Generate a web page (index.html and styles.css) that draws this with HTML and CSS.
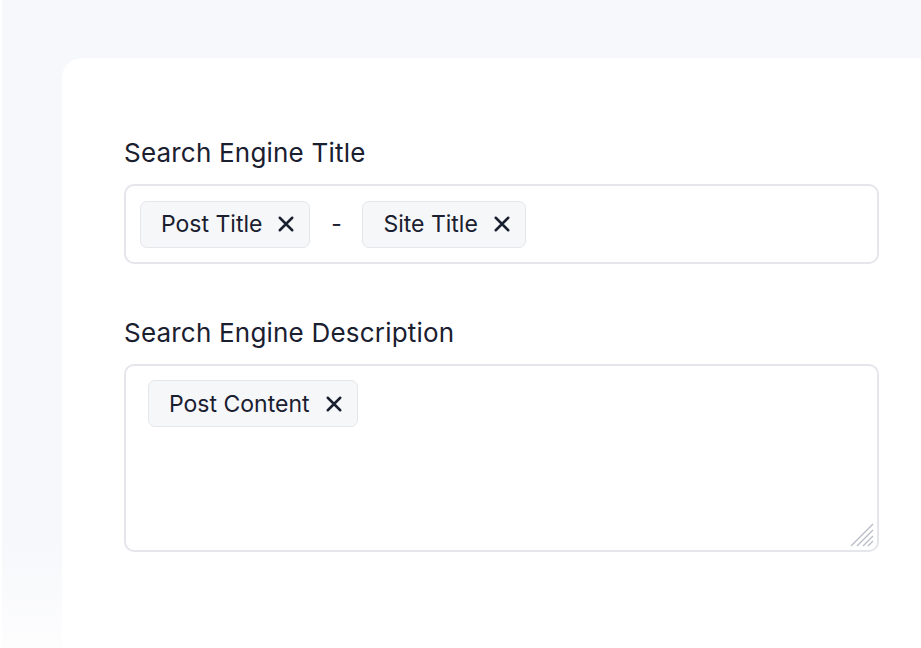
FILE: index.html
```html
<!DOCTYPE html>
<html lang="en">
<head>
    <meta charset="UTF-8">
    <meta name="viewport" content="width=device-width, initial-scale=1.0">
    <title>SEO Settings</title>
    <link rel="stylesheet" href="styles.css">
</head>
<body>
    <div class="page">
        <div class="card">
            <div class="field">
                <label class="field-label">Search Engine Title</label>
                <div class="tag-input">
                    <span class="chip">Post Title
                        <svg class="chip-x" viewBox="0 0 16 16"><path d="M3 3L13 13M13 3L3 13"/></svg>
                    </span>
                    <span class="sep">-</span>
                    <span class="chip">Site Title
                        <svg class="chip-x" viewBox="0 0 16 16"><path d="M3 3L13 13M13 3L3 13"/></svg>
                    </span>
                </div>
            </div>

            <div class="field">
                <label class="field-label">Search Engine Description</label>
                <div class="tag-input tag-area">
                    <span class="chip">Post Content
                        <svg class="chip-x" viewBox="0 0 16 16"><path d="M3 3L13 13M13 3L3 13"/></svg>
                    </span>
                    <svg class="grip" viewBox="0 0 24 24"><path d="M23 1L1 23M23 7L7 23M23 13L13 23M23 18L18 23"/></svg>
                </div>
            </div>
        </div>
    </div>
</body>
</html>
```

FILE: styles.css
```css
html, body {
    margin: 0;
    height: 100%;
    overflow: hidden;
}

body {
    font-family: Inter, "Noto Sans", sans-serif;
    color: #1a2030;
    background: #fff;
}

.page {
    height: 100%;
    margin-left: 2px;
    padding-top: 58px;
    box-sizing: border-box;
    background: linear-gradient(to bottom, #f7f8fb 0%, #f7f8fb 84%, #fdfdfe 100%);
}

.card {
    box-sizing: border-box;
    margin: 0 -30px 0 60px;
    height: 100%;
    background: #fff;
    border-radius: 20px 20px 0 0;
    padding: 79px 72px 0 62px;
}

.field {
    margin-bottom: 53px;
}

.field-label {
    display: block;
    font-size: 26px;
    line-height: 32px;
    letter-spacing: 0.2px;
    margin-bottom: 15px;
}

.tag-input {
    position: relative;
    display: flex;
    align-items: center;
    gap: 19px;
    height: 80px;
    box-sizing: border-box;
    padding: 0 14px;
    border: 2px solid #e5e6eb;
    border-radius: 10px;
    background: #fff;
}

.tag-area {
    align-items: flex-start;
    height: 188px;
    padding: 14px 22px;
}

.chip {
    display: inline-flex;
    align-items: center;
    gap: 14px;
    height: 47px;
    box-sizing: border-box;
    padding: 0 13px 0 20px;
    background: #f6f7f9;
    border: 1px solid #e5e7eb;
    border-radius: 7px;
    font-size: 23px;
}

.chip-x {
    width: 20px;
    height: 20px;
    fill: none;
    stroke: #1a2030;
    stroke-width: 2;
    stroke-linecap: round;
}

.sep {
    width: 14px;
    text-align: center;
    font-size: 23px;
}

.grip {
    position: absolute;
    right: 3px;
    bottom: 3px;
    width: 24px;
    height: 24px;
    fill: none;
    stroke: #b8bcc6;
    stroke-width: 1.3;
}
```
